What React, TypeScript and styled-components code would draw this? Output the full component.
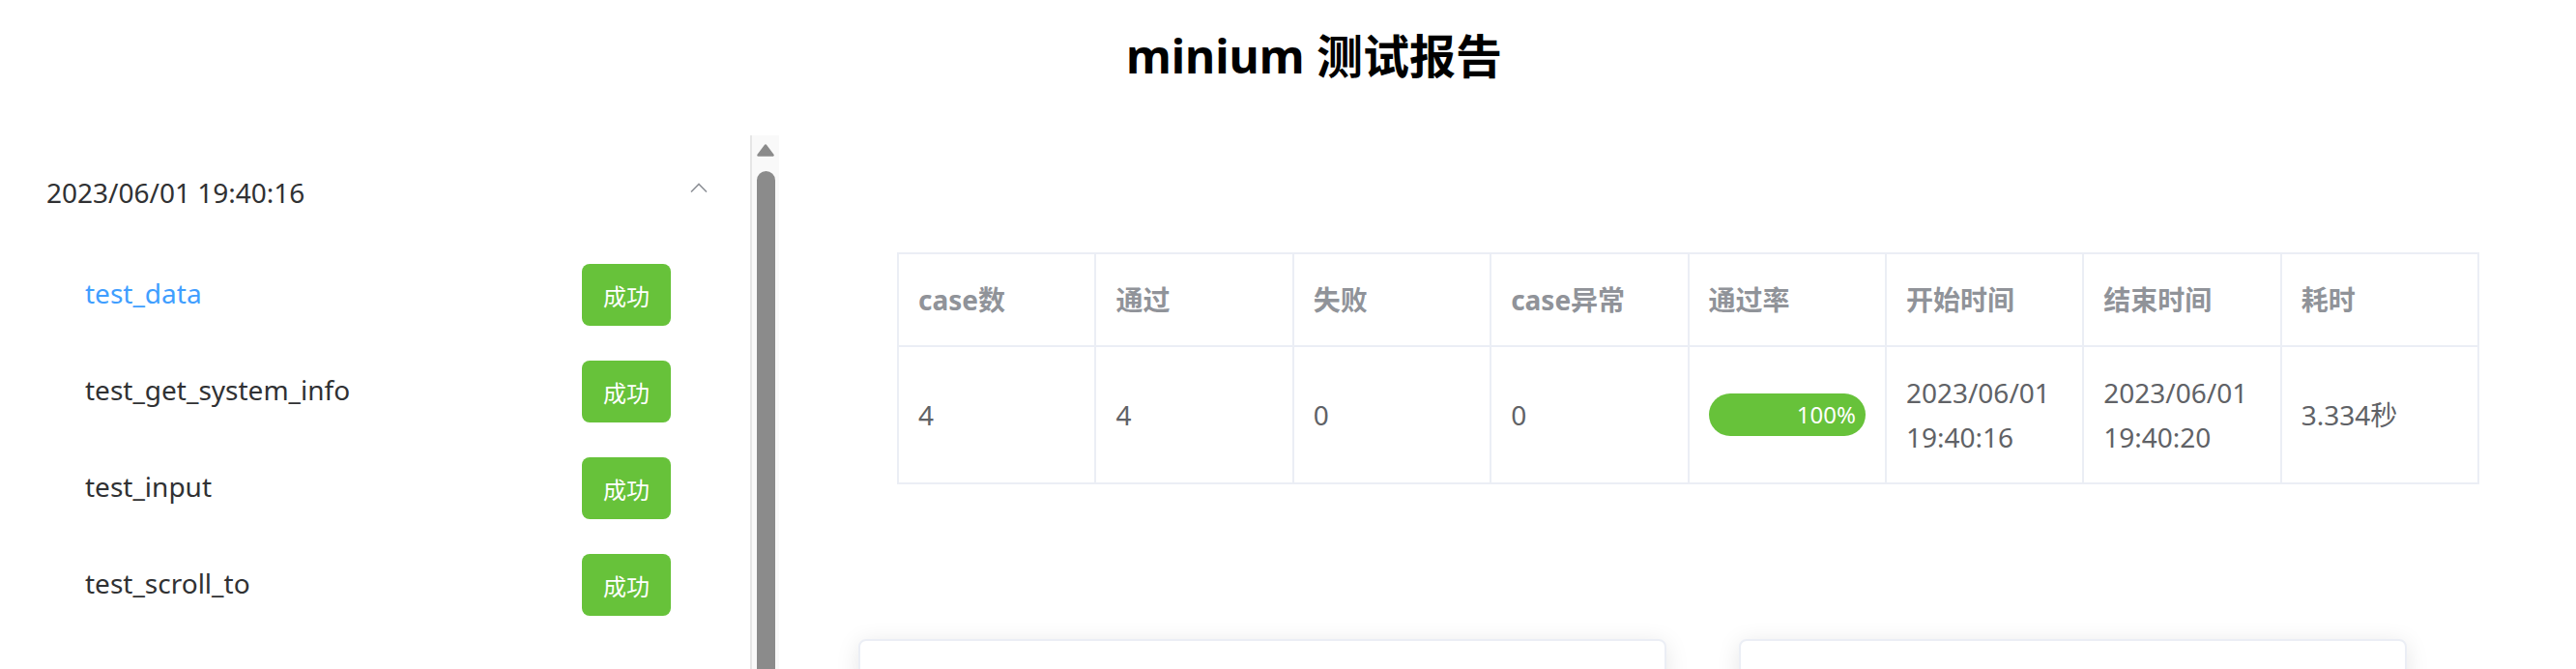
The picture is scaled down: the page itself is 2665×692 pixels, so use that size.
import React from "react";
import styled, { createGlobalStyle } from "styled-components";

const GlobalStyle = createGlobalStyle`
  html, body { margin: 0; padding: 0; background: #fff; overflow: hidden; }
  body { font-family: "Noto Sans", "Noto Sans CJK SC", sans-serif; }
  * { box-sizing: border-box; }
`;

const Page = styled.div`
  width: 2665px;
  height: 692px;
  overflow: hidden;
  display: flex;
  flex-direction: column;
`;

const Header = styled.header`
  height: 140px;
  flex: none;
  display: flex;
  justify-content: center;
  padding: 34px 0 0 54px;
`;

const Title = styled.h1`
  margin: 0;
  font-size: 48px;
  line-height: 48px;
  font-weight: 700;
  color: #000;
  font-family: "Noto Sans", "Noto Sans CJK SC", sans-serif;
`;

const Body = styled.div`
  display: flex;
  flex: 1;
  min-height: 0;
`;

const Aside = styled.aside`
  width: 778px;
  flex: none;
  border-right: 2px solid #e6e6e6;
  padding-top: 3px;
`;

const GroupTitle = styled.div`
  height: 112px;
  display: flex;
  align-items: center;
  justify-content: space-between;
  padding: 0 44px 0 48px;
  font-size: 28px;
  color: #303133;
`;

const Arrow = styled.svg`
  width: 18px;
  height: 10px;
  margin-top: -10px;
`;

const Item = styled.div<{ $active?: boolean }>`
  height: 100px;
  display: flex;
  align-items: center;
  justify-content: space-between;
  padding: 0 82px 0 88px;
  font-size: 28px;
  color: ${(p) => (p.$active ? "#409eff" : "#303133")};
`;

const ItemLabel = styled.span`
  padding-bottom: 5px;
`;

const SuccessButton = styled.button`
  width: 92px;
  height: 64px;
  border: none;
  border-radius: 8px;
  background: #67c23a;
  color: #fff;
  font-size: 24px;
  font-family: "Noto Sans CJK SC", sans-serif;
  padding: 0;
`;

const ScrollTrack = styled.div`
  width: 28px;
  flex: none;
  background: #f9f9f9;
  display: flex;
  flex-direction: column;
  align-items: center;
  padding-top: 9px;
  gap: 15px;
`;

const ScrollArrow = styled.svg`
  width: 18px;
  height: 13px;
  flex: none;
`;

const ScrollThumb = styled.div`
  width: 19px;
  height: 620px;
  flex: none;
  border-radius: 10px;
  background: #8b8b8b;
`;

const Main = styled.main`
  flex: 1;
  padding: 121px 0 0 82px;
`;

const TableWrap = styled.div`
  margin-left: 40px;
`;

const Table = styled.table`
  width: 1637px;
  table-layout: fixed;
  border-collapse: collapse;
  font-size: 28px;
`;

const Th = styled.th`
  border: 2px solid #ebeef5;
  padding: 24px 0;
  text-align: left;
  vertical-align: middle;
  font-weight: 700;
  color: #909399;
`;

const Td = styled.td`
  border: 2px solid #ebeef5;
  padding: 24px 0;
  text-align: left;
  vertical-align: middle;
  color: #606266;
`;

const Cell = styled.div`
  padding: 0 20px;
  line-height: 46px;
`;

const Progress = styled.div`
  height: 44px;
  border-radius: 22px;
  background: #67c23a;
  display: flex;
  align-items: center;
  justify-content: flex-end;
  padding-right: 10px;
  color: #fff;
  font-size: 24px;
  line-height: 24px;
`;

const Cards = styled.div`
  display: flex;
  gap: 75px;
  margin-top: 160px;
`;

const Card = styled.div<{ $w: number }>`
  width: ${(p) => p.$w}px;
  height: 400px;
  flex: none;
  background: #fff;
  border: 2px solid #ebeef5;
  border-radius: 8px;
  box-shadow: 0 4px 24px rgba(0, 0, 0, 0.1);
`;

const cases = ["test_data", "test_get_system_info", "test_input", "test_scroll_to"];
const heads = ["case数", "通过", "失败", "case异常", "通过率", "开始时间", "结束时间", "耗时"];

export default function App() {
  return (
    <Page>
      <GlobalStyle />
      <Header>
        <Title>minium 测试报告</Title>
      </Header>
      <Body>
        <Aside>
          <GroupTitle>
            <span>2023/06/01 19:40:16</span>
            <Arrow viewBox="0 0 18 10">
              <polyline points="1,9.5 9,1.5 17,9.5" fill="none" stroke="#909399" strokeWidth="1.6" />
            </Arrow>
          </GroupTitle>
          {cases.map((c, i) => (
            <Item key={c} $active={i === 0}>
              <ItemLabel>{c}</ItemLabel>
              <SuccessButton>成功</SuccessButton>
            </Item>
          ))}
        </Aside>
        <ScrollTrack>
          <ScrollArrow viewBox="0 0 18 13">
            <path d="M9 1.5 L16.5 11.5 L1.5 11.5 Z" fill="#8b8b8b" stroke="#8b8b8b" strokeWidth="2.5" strokeLinejoin="round" />
          </ScrollArrow>
          <ScrollThumb />
        </ScrollTrack>
        <Main>
          <TableWrap>
            <Table>
              <thead>
                <tr>
                  {heads.map((h) => (
                    <Th key={h}>
                      <Cell>{h}</Cell>
                    </Th>
                  ))}
                </tr>
              </thead>
              <tbody>
                <tr>
                  <Td><Cell>4</Cell></Td>
                  <Td><Cell>4</Cell></Td>
                  <Td><Cell>0</Cell></Td>
                  <Td><Cell>0</Cell></Td>
                  <Td>
                    <Cell>
                      <Progress>100%</Progress>
                    </Cell>
                  </Td>
                  <Td><Cell>2023/06/01 19:40:16</Cell></Td>
                  <Td><Cell>2023/06/01 19:40:20</Cell></Td>
                  <Td><Cell>3.334秒</Cell></Td>
                </tr>
              </tbody>
            </Table>
          </TableWrap>
          <Cards>
            <Card $w={836} />
            <Card $w={691} />
          </Cards>
        </Main>
      </Body>
    </Page>
  );
}
